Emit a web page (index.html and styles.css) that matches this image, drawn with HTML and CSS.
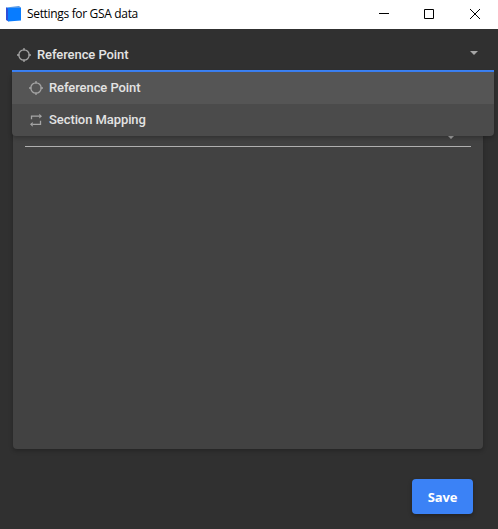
FILE: index.html
```html
<!DOCTYPE html>
<html lang="en">
<head>
<meta charset="utf-8">
<title>Settings for GSA data</title>
<link rel="stylesheet" href="styles.css">
</head>
<body>
<svg class="defs" aria-hidden="true">
  <symbol id="target" viewBox="0 0 14 14"><circle cx="7" cy="7" r="5.2"/><path d="M7 0v2.500M7 11.500V14M0 7h2.500M11.500 7H14"/></symbol>
  <symbol id="repeat" viewBox="0 0 14 14"><path d="M2.500 6.200V3.200H10.500M11.500 7.800v3.500H3.500"/><path class="solid" d="M10.300.8 13 3.200 10.300 5.600zM3.700 8.900 1 11.300 3.700 13.700z"/></symbol>
</svg>
<div class="window">
  <header class="titlebar">
    <svg class="app-icon" viewBox="0 0 16 16"><path fill="#5599e8" d="M0 1.500 13 0l2 1.500V4H0z"/><path fill="#2f4fd8" d="M0 1.500 2.500 2.500V15.500L0 14z"/><path fill="#087cff" d="M2 2h13v12.500L2 15.500z"/></svg>
    <h1 class="title">Settings for GSA data</h1>
    <div class="controls">
      <svg class="minimize" viewBox="0 0 10 10"><path d="M0 4.500h10"/></svg>
      <svg viewBox="0 0 10 10"><path d="M.5.5h9v9h-9z"/></svg>
      <svg viewBox="0 0 10 10"><path d="m0 0 10 10M10 0 0 10"/></svg>
    </div>
  </header>
  <main class="content">
    <div class="select">
      <svg class="icon"><use href="#target"/></svg>
      <span class="label">Reference Point</span>
      <i class="caret"></i>
      <ul class="menu">
        <li class="option active"><svg class="icon"><use href="#target"/></svg><span class="label">Reference Point</span></li>
        <li class="option"><svg class="icon"><use href="#repeat"/></svg><span class="label">Section Mapping</span></li>
      </ul>
    </div>
    <section class="card">
      <div class="field"><i class="caret"></i></div>
    </section>
    <footer class="actions"><button class="save">Save</button></footer>
  </main>
</div>
</body>
</html>
```

FILE: styles.css
```css
* { box-sizing: border-box; }
body { margin: 0; background: #303030; font-family: Roboto, sans-serif; overflow: hidden; }
.defs { position: absolute; width: 0; height: 0; }
.window { height: 529px; display: flex; flex-direction: column; }
.titlebar { height: 29px; background: #fff; display: flex; align-items: center; padding: 0 18px 2px 6px; }
.app-icon { width: 16px; height: 16px; }
.title { margin: 0 0 0 5px; font: 400 12px/18px "Open Sans", sans-serif; letter-spacing: -0.33px; color: #000; white-space: nowrap; }
.controls { margin-left: auto; display: flex; gap: 36px; }
.controls svg { width: 10px; height: 10px; fill: none; stroke: #000; stroke-width: 1; overflow: visible; }
.controls .minimize { margin-right: -1px; }
.content { flex: 1; display: flex; flex-direction: column; padding: 9px 4px 0 12px; }
.select { position: relative; height: 34px; border-bottom: 2px solid #3b82f6; display: flex; align-items: center; padding: 1px 16px 0 5px; }
.icon { width: 14px; height: 14px; flex: none; fill: none; stroke: #a5a5a5; stroke-width: 1.3; }
.solid { fill: #a5a5a5; stroke: none; }
.label { margin-left: 6px; font-size: 13px; line-height: 18px; font-weight: 500; letter-spacing: -0.08px; color: #e3e3e3; white-space: nowrap; }
.caret { width: 0; height: 0; margin-left: auto; border: 4px solid transparent; border-top-color: #a6a6a6; border-bottom: 0; }
.select > .caret { margin-bottom: 3px; }
.menu { position: absolute; z-index: 2; top: 34px; left: 0; right: 0; margin: 0; padding: 0; list-style: none; background: #4b4b4b; border-radius: 0 0 4px 4px; overflow: hidden; box-shadow: 0 2px 4px rgba(0, 0, 0, .25); }
.option { height: 32px; display: flex; align-items: center; padding-left: 17px; }
.option.active { background: #555; }
.card { height: 373px; margin: 4px 11px 0 1px; padding: 0 12px; background: #424242; border-radius: 4px; box-shadow: 0 2px 4px rgba(0, 0, 0, .25); }
.field { height: 71px; border-bottom: 1px solid #b0b0b0; display: flex; align-items: flex-end; padding: 0 16px 7px 0; }
.actions { display: flex; justify-content: flex-end; padding: 30px 21px 0 0; }
.save { width: 61px; height: 35px; border: 0; border-radius: 4px; padding: 1px 0 0; background: #3b82f6; color: #fff; font: 700 13px "Open Sans", sans-serif; letter-spacing: -0.1px; box-shadow: 0 2px 4px rgba(0, 0, 0, .3); }
```
